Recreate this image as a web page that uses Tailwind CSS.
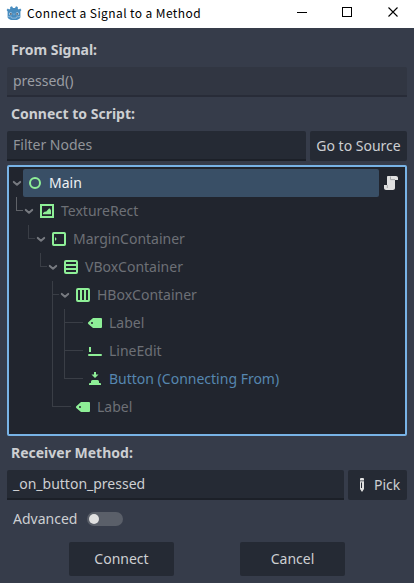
<!DOCTYPE html>
<html lang="en">
<head>
<meta charset="utf-8">
<title>Connect a Signal to a Method</title>
<script src="https://cdn.jsdelivr.net/npm/@tailwindcss/browser@4"></script>
</head>
<body class="w-[414px] h-[583px] overflow-hidden bg-[#363c4a] font-['Noto_Sans',sans-serif] text-[14px] leading-[20px] text-[#cdcfd2] flex flex-col">
<svg class="hidden">
  <symbol id="chev" viewBox="0 0 10 10"><path d="M1.8 3.9 5 6.7 8.2 3.9" fill="none" stroke="#777a80" stroke-width="2" stroke-linecap="round" stroke-linejoin="round"/></symbol>
  <symbol id="label" viewBox="0 0 16 16"><path fill="#8eef97" fill-rule="evenodd" d="M6 3 1.3 7.2a1.2 1.2 0 0 0 0 1.7L6 13h8a1 1 0 0 0 1-1V4a1 1 0 0 0-1-1zM5 7a1 1 0 1 1 0 2 1 1 0 0 1 0-2z"/></symbol>
</svg>
<header class="h-[28px] shrink-0 bg-white flex items-center pl-[6px] text-black">
  <svg class="size-4 -mt-[3px]" viewBox="0 0 16 16"><path fill="#478cbf" d="M6 1.200 7 3h2l1-1.800 1.800.7v1.800l1 .7 1.400-1L15.400 5l-1 1.500V12c0 2-3 3.100-6.400 3.100S1.600 14 1.600 12V6.500L.6 5l1.200-1.600 1.400 1 1-.7V1.900z"/><circle cx="4.700" cy="8.800" r="1.500" fill="#c9dded"/><circle cx="11.300" cy="8.800" r="1.500" fill="#c9dded"/><circle cx="4.900" cy="8.900" r=".9" fill="#414f60"/><circle cx="11.100" cy="8.900" r=".9" fill="#414f60"/><path d="M8 8.400v1.800M2 11.600l3.500.3.300 1.200h4.400l.3-1.200 3.500-.3" stroke="#a9c9e2" stroke-width=".7" fill="none"/></svg>
  <h1 class="ml-[5px] -mt-[3px] text-[12px] leading-[18px] tracking-[0.4px] font-['Noto_Sans_CJK_SC',sans-serif] whitespace-nowrap">Connect a Signal to a Method</h1>
  <svg class="ml-auto mr-[15px] w-[103px] h-[12px] -mt-[4px]" viewBox="0 0 103 12" fill="none" stroke="#000" shape-rendering="crispEdges"><path d="M1 6.500h10"/><path d="M46.500 1.500h9v9h-9z"/><path d="m92.500 1.500 9 9m0-9-9 9" shape-rendering="auto" stroke-width="1.100"/></svg>
</header>
<main class="px-[7px] flex flex-col">
  <h2 class="h-[39px] pt-[12px] pl-[4px] font-bold">From Signal:</h2>
  <div class="h-[30px] bg-[#313642] border-b-2 border-[#282c38] rounded-t-[2px] pl-[6px] pt-[4px] text-[#9b9ea4]">pressed()</div>
  <h2 class="h-[34px] pt-[7px] pl-[4px] font-bold">Connect to Script:</h2>
  <div class="flex gap-1 h-[30px]">
    <div class="w-[299px] bg-[#252a34] border-b-2 border-[#1c2028] rounded-t-[2px] pl-[6px] pt-[4px] text-[#92959a]">Filter Nodes</div>
    <button class="w-[97px] bg-[#252a34] rounded-[2px] pb-px whitespace-nowrap">Go to Source</button>
  </div>
  <section class="relative mt-[4px] h-[271px] border-2 border-[#78b3e6] rounded-[2px] bg-[#21252e] pt-[2px] text-[#6d7076]">
    <svg class="absolute left-0 top-0 w-[100px] h-[260px]" viewBox="9 167 100 260" fill="none" stroke="#3a3e46" shape-rendering="crispEdges"><path stroke="#5f6268" d="M16.500 197v13.500H23"/><path d="M28.500 225v13.500H35M40.500 253v13.500H47M52.500 281v125.500H71M52.500 294.500H59M64.500 309v69.500H83M64.500 322.500H83M64.500 350.500H83"/></svg>
    <div class="h-[28px] flex items-center pl-[3px]">
      <svg class="size-[10px]"><use href="#chev"/></svg>
      <div class="ml-px w-[356px] h-[28px] bg-[#394f66] rounded-[2px] flex items-center pl-[4px] text-[#eef1f4]">
        <svg class="size-4" viewBox="0 0 16 16"><circle cx="8" cy="8" r="5" fill="none" stroke="#8eef97" stroke-width="2"/></svg>
        <span class="ml-[6px]">Main</span>
      </div>
      <svg class="ml-[4px] size-4" viewBox="0 0 16 16"><path fill="#e0e0e0" d="M5 1C4.400 1 4 1.600 4 2v8H1v3c0 1.100.9 2 2 2h7c1.100 0 2-.9 2-2V5h3V3c0-1.100-.9-2-2-2z"/><path fill="none" stroke="#9fa1a4" stroke-width=".9" d="M7.500 1.500v3.100H12M4.300 10v3"/></svg>
    </div>
    <div class="h-[28px] flex items-center pl-[15px]">
      <svg class="size-[10px]"><use href="#chev"/></svg>
      <svg class="ml-[5px] size-4" viewBox="0 0 16 16"><path fill="none" stroke="#8eef97" stroke-width="2" d="M2 2h12v12H2z"/><path fill="#8eef97" d="M4 11.200V10l2-1.500 1 .3 3-3.300h1l1 2v3.700z"/></svg>
      <span class="ml-[6px]">TextureRect</span>
    </div>
    <div class="h-[28px] flex items-center pl-[27px]">
      <svg class="size-[10px]"><use href="#chev"/></svg>
      <svg class="ml-[5px] size-4" viewBox="0 0 16 16"><rect x="2" y="2" width="12" height="12" rx=".7" fill="none" stroke="#8eef97" stroke-width="2"/><path fill="#8eef97" d="M4 6v4l1.700-2z"/></svg>
      <span class="ml-[6px]">MarginContainer</span>
    </div>
    <div class="h-[28px] flex items-center pl-[39px]">
      <svg class="size-[10px]"><use href="#chev"/></svg>
      <svg class="ml-[5px] size-4" viewBox="0 0 16 16" fill="none" stroke="#8eef97" stroke-width="2"><rect x="2" y="2" width="12" height="12" rx="1"/><path d="M3 6h10M3 10h10"/></svg>
      <span class="ml-[6px]">VBoxContainer</span>
    </div>
    <div class="h-[28px] flex items-center pl-[51px]">
      <svg class="size-[10px]"><use href="#chev"/></svg>
      <svg class="ml-[5px] size-4" viewBox="0 0 16 16" fill="none" stroke="#8eef97" stroke-width="2"><rect x="2" y="2" width="12" height="12" rx="1"/><path d="M6 3v10M10 3v10"/></svg>
      <span class="ml-[6px]">HBoxContainer</span>
    </div>
    <div class="h-[28px] flex items-center pl-[78px]">
      <svg class="size-4"><use href="#label"/></svg>
      <span class="ml-[6px]">Label</span>
    </div>
    <div class="h-[28px] flex items-center pl-[78px]">
      <svg class="size-4" viewBox="0 0 16 16"><path fill="#8eef97" d="M2 4h2v5H2zM2 11h12a1 1 0 0 1 0 2H2a1 1 0 0 1 0-2z"/></svg>
      <span class="ml-[6px]">LineEdit</span>
    </div>
    <div class="h-[28px] flex items-center pl-[78px]">
      <svg class="size-4" viewBox="0 0 16 16"><path fill="#8eef97" d="M7 1h2v2.500h2.500L8 7 4.500 3.500H7zM5.500 9h5a1.500 1.500 0 0 1 1.500 1.500V12h1a1 1 0 0 1 1 1v1H2v-1a1 1 0 0 1 1-1h1v-1.500A1.500 1.500 0 0 1 5.500 9z"/></svg>
      <span class="ml-[6px] text-[#5687b0]">Button (Connecting From)</span>
    </div>
    <div class="h-[28px] flex items-center pl-[66px]">
      <svg class="size-4"><use href="#label"/></svg>
      <span class="ml-[6px]">Label</span>
    </div>
  </section>
  <h2 class="h-[34px] pt-[7px] pl-[4px] font-bold">Receiver Method:</h2>
  <div class="flex gap-1 h-[30px]">
    <div class="w-[337px] bg-[#252a34] border-b-2 border-[#1c2028] rounded-t-[2px] pl-[6px] pt-[4px]">_on_button_pressed</div>
    <button class="w-[59px] bg-[#252a34] rounded-[2px] flex items-center pl-[6px]">
      <svg class="size-4" viewBox="0 0 16 16"><path fill="#e0e0e0" fill-rule="evenodd" d="M6 3.500V2a1 1 0 0 1 1-1h2a1 1 0 0 1 1 1v1.500zM6 4.300h4V12l-2 3-2-3zM7 5.500V11h1V5.500z"/></svg>
      <span class="ml-[4px]">Pick</span>
    </button>
  </div>
  <div class="h-[42px] pl-[6px] flex items-center pb-[4px]">
    <span>Advanced</span>
    <span class="ml-[10px] w-[36px] h-[14px] rounded-full bg-[#5a5f69] flex items-center pl-[2px]"><span class="size-[10px] rounded-full bg-[#e0e0e0]"></span></span>
  </div>
  <div class="flex gap-[66px] pl-[62px]">
    <button class="w-[105px] h-[34px] bg-[#252a34] rounded-[2px]">Connect</button>
    <button class="w-[105px] h-[34px] bg-[#252a34] rounded-[2px]">Cancel</button>
  </div>
</main>
</body>
</html>
